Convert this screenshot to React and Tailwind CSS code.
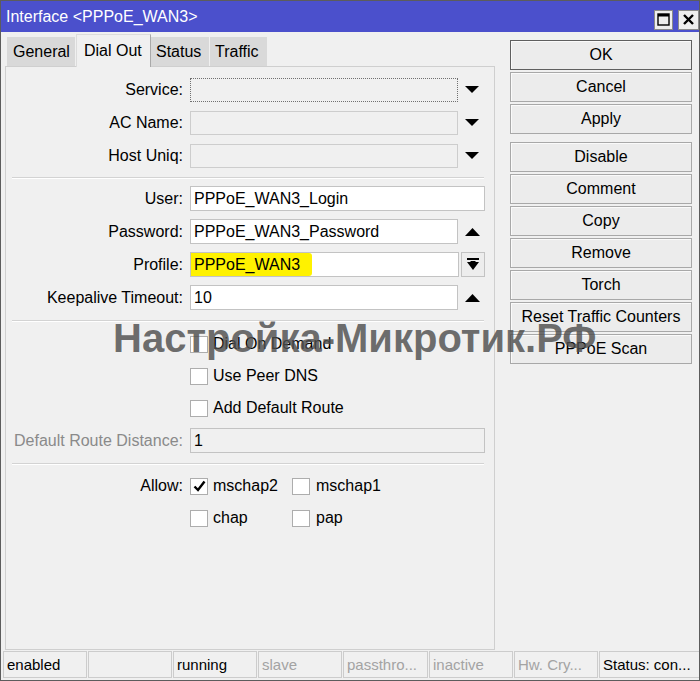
import React from "react";

function TriDown() {
  return (
    <svg width="14" height="7" viewBox="0 0 14 7">
      <polygon points="0,0 14,0 7,7" fill="#000" />
    </svg>
  );
}
function TriUp() {
  return (
    <svg width="15" height="8" viewBox="0 0 15 8">
      <polygon points="0,8 15,8 7.5,0" fill="#000" />
    </svg>
  );
}
function BarDown() {
  return (
    <svg width="14" height="13" viewBox="0 0 14 13">
      <rect x="1" y="0" width="12" height="2" fill="#000" />
      <polygon points="1,4 13,4 7,12" fill="#000" />
      <rect x="4.5" y="3" width="5" height="3" fill="#000" />
    </svg>
  );
}

function Label({ children, gray }) {
  return (
    <div className={"w-[171px] text-right shrink-0 " + (gray ? "text-[#8a8a8a]" : "text-black")}>
      {children}
    </div>
  );
}

function Row({ h = "h-[33px]", children }) {
  return <div className={"flex items-center " + h}>{children}</div>;
}

function Sep({ mt, mb }) {
  return <div className={"h-0 border-t border-t-[#d3d3d3] border-b border-b-white mr-[2px] " + mt + " " + mb}></div>;
}

function Check({ checked }) {
  return (
    <div className="w-[18px] h-[17px] border border-[#adadad] bg-white flex items-center justify-center shrink-0">
      {checked && (
        <svg width="13" height="12" viewBox="0 0 13 12">
          <polyline points="1.5,6.5 5,10 11.5,1.5" fill="none" stroke="#000" strokeWidth="2.4" />
        </svg>
      )}
    </div>
  );
}

function Btn({ children, def, cls = "" }) {
  return (
    <div
      className={
        "h-[30px] w-[182px] flex items-center justify-center bg-[#ececec] shadow-[inset_1px_1px_0_#fafafa] text-black " +
        (def ? "border border-[#5f5f5f] " : "border border-[#a8a8a8] ") +
        cls
      }
    >
      {children}
    </div>
  );
}

function Cell({ children, gray, w = "w-[84px]" }) {
  return (
    <div
      className={
        "h-[27px] border border-[#cccccc] flex items-center px-[3px] whitespace-nowrap overflow-hidden shrink-0 " +
        w +
        (gray ? " text-[#a3a3a3]" : " text-black")
      }
    >
      {children}
    </div>
  );
}

export default function App() {
  return (
    <div className="relative w-[700px] h-[681px] bg-[#f0f0f0] border border-[#5c5c5c] flex flex-col font-['Liberation_Sans',Arial,sans-serif] text-[16px] leading-none overflow-hidden">
      {/* Title bar */}
      <div className="h-[31px] bg-[#4b50cc] flex items-center justify-between pl-[5px] pr-[0px] shrink-0">
        <span className="text-white text-[16px]">Interface &lt;PPPoE_WAN3&gt;</span>
        <div className="flex items-center gap-[5px] mt-[6px]">
          <div className="w-[19px] h-[20px] bg-[#eeeeee] border border-[#8a8a8a] flex items-center justify-center">
            <svg width="13" height="13" viewBox="0 0 13 13">
              <rect x="1" y="1" width="11" height="11" fill="none" stroke="#000" strokeWidth="1.4" />
              <rect x="1" y="1" width="11" height="2.5" fill="#000" />
            </svg>
          </div>
          <div className="w-[21px] h-[20px] bg-[#eeeeee] border border-[#8a8a8a] flex items-center justify-center">
            <svg width="13" height="13" viewBox="0 0 13 13">
              <path d="M2 2 L11 11 M11 2 L2 11" stroke="#000" strokeWidth="2.4" />
            </svg>
          </div>
        </div>
      </div>

      {/* Body */}
      <div className="flex flex-1 min-h-0">
        {/* Left column */}
        <div className="ml-[4px] w-[490px] flex flex-col">
          {/* Tabs */}
          <div className="h-[34px] flex items-end pl-[2px] shrink-0">
            <div className="w-[68px] h-[29px] bg-[#d9d9d9] flex items-center pl-[6px] mr-[1px]">General</div>
            <div className="w-[75px] h-[33px] bg-[#f0f0f0] border-l border-t border-r border-l-[#dcdcdc] border-t-[#dcdcdc] border-r-[#a9a9a9] flex items-start pt-[8px] pl-[7px] relative top-[1px]">
              Dial Out
            </div>
            <div className="w-[58px] h-[29px] bg-[#d9d9d9] flex items-center pl-[5px] mr-[1px]">Status</div>
            <div className="w-[57px] h-[29px] bg-[#d9d9d9] flex items-center pl-[5px]">Traffic</div>
          </div>

          {/* Panel */}
          <div className="flex-1 border border-[#cfcfcf] bg-[#f0f0f0] pl-[6px] pr-[8px] pt-[6px] flex flex-col">
            <Row>
              <Label>Service:</Label>
              <div className="ml-[7px] w-[268px] h-[24px] border border-dotted border-[#707070] bg-[#f0f0f0]"></div>
              <div className="w-[27px] flex justify-center pl-[1px]"><TriDown /></div>
            </Row>
            <Row>
              <Label>AC Name:</Label>
              <div className="ml-[7px] w-[268px] h-[24px] border border-[#cdcdcd] bg-[#f0f0f0]"></div>
              <div className="w-[27px] flex justify-center pl-[1px]"><TriDown /></div>
            </Row>
            <Row>
              <Label>Host Uniq:</Label>
              <div className="ml-[7px] w-[268px] h-[24px] border border-[#cdcdcd] bg-[#f0f0f0]"></div>
              <div className="w-[27px] flex justify-center pl-[1px]"><TriDown /></div>
            </Row>

            <Sep mt="mt-[5px]" mb="mb-[3px]" />

            <Row>
              <Label>User:</Label>
              <div className="ml-[7px] w-[295px] h-[25px] border border-[#c3c3c3] bg-white flex items-center pl-[3px]">PPPoE_WAN3_Login</div>
            </Row>
            <Row>
              <Label>Password:</Label>
              <div className="ml-[7px] w-[268px] h-[25px] border border-[#c3c3c3] bg-white flex items-center pl-[3px]">PPPoE_WAN3_Password</div>
              <div className="w-[27px] flex justify-center pl-[2px]"><TriUp /></div>
            </Row>
            <Row>
              <Label>Profile:</Label>
              <div className="ml-[7px] w-[269px] h-[25px] border border-[#c3c3c3] bg-white flex items-stretch">
                <span className="bg-[#fff200] flex items-center pl-[3px] pr-[12px] rounded-r-[3px]">PPPoE_WAN3</span>
              </div>
              <div className="ml-[2px] w-[24px] h-[25px] border border-[#c3c3c3] bg-[#ededed] flex items-center justify-center">
                <BarDown />
              </div>
            </Row>
            <Row>
              <Label>Keepalive Timeout:</Label>
              <div className="ml-[7px] w-[268px] h-[25px] border border-[#c3c3c3] bg-white flex items-center pl-[3px]">10</div>
              <div className="w-[27px] flex justify-center pl-[2px]"><TriUp /></div>
            </Row>

            <Sep mt="mt-[6px]" mb="mb-[6px]" />

            <Row h="h-[32px]">
              <div className="w-[171px] shrink-0"></div>
              <div className="ml-[7px]"><Check /></div>
              <span className="ml-[5px]">Dial On Demand</span>
            </Row>
            <Row h="h-[32px]">
              <div className="w-[171px] shrink-0"></div>
              <div className="ml-[7px]"><Check /></div>
              <span className="ml-[5px]">Use Peer DNS</span>
            </Row>
            <Row h="h-[32px]">
              <div className="w-[171px] shrink-0"></div>
              <div className="ml-[7px]"><Check /></div>
              <span className="ml-[5px]">Add Default Route</span>
            </Row>
            <Row h="h-[33px]">
              <Label gray>Default Route Distance:</Label>
              <div className="ml-[7px] w-[295px] h-[25px] border border-[#c3c3c3] bg-[#f0f0f0] flex items-center pl-[3px]">1</div>
            </Row>

            <Sep mt="mt-[6px]" mb="mb-[5px]" />

            <Row h="h-[32px]">
              <Label>Allow:</Label>
              <div className="ml-[7px] w-[102px] flex items-center">
                <Check checked />
                <span className="ml-[5px]">mschap2</span>
              </div>
              <div className="flex items-center">
                <Check />
                <span className="ml-[6px]">mschap1</span>
              </div>
            </Row>
            <Row h="h-[32px]">
              <div className="w-[171px] shrink-0"></div>
              <div className="ml-[7px] w-[102px] flex items-center">
                <Check />
                <span className="ml-[5px]">chap</span>
              </div>
              <div className="flex items-center">
                <Check />
                <span className="ml-[6px]">pap</span>
              </div>
            </Row>
          </div>
        </div>

        {/* Right column */}
        <div className="ml-[15px] pt-[8px] flex flex-col gap-[2px]">
          <Btn def>OK</Btn>
          <Btn>Cancel</Btn>
          <Btn>Apply</Btn>
          <Btn cls="mt-[6px]">Disable</Btn>
          <Btn>Comment</Btn>
          <Btn>Copy</Btn>
          <Btn>Remove</Btn>
          <Btn>Torch</Btn>
          <Btn>Reset Traffic Counters</Btn>
          <Btn>PPPoE Scan</Btn>
        </div>
      </div>

      {/* Status bar */}
      <div className="h-[30px] py-[1px] pl-[2px] flex gap-[1px] text-[15px] shrink-0">
        <Cell>enabled</Cell>
        <Cell></Cell>
        <Cell>running</Cell>
        <Cell gray>slave</Cell>
        <Cell gray w="w-[85px]">passthro...</Cell>
        <Cell gray>inactive</Cell>
        <Cell gray>Hw. Cry...</Cell>
        <Cell w="w-[103px]">Status: con...</Cell>
      </div>

      {/* Watermark */}
      <div className="absolute left-[112px] top-[317px] text-[40px] font-bold leading-none whitespace-nowrap pointer-events-none text-[rgba(78,78,78,0.82)]">
        Настройка-Микротик.РФ
      </div>
    </div>
  );
}
